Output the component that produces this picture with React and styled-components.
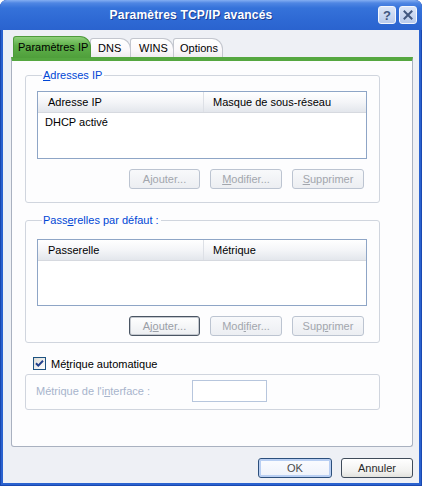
import React from 'react';
import styled, { createGlobalStyle, css } from 'styled-components';

const Global = createGlobalStyle`
  html, body { margin: 0; padding: 0; background: #ffffff; }
  body { font-family: "Liberation Sans", Arial, sans-serif; font-size: 11px; color: #000; }
`;

const Window = styled.div`
  width: 422px;
  height: 486px;
  box-sizing: border-box;
  display: flex;
  flex-direction: column;
  background: #2a62cf;
  border-radius: 7px 7px 0 0;
  overflow: hidden;
  box-shadow: inset 1px 0 0 #1a48b0, inset -1px 0 0 #1a48b0, inset 0 -1px 0 #1a48b0;
`;

const TitleBar = styled.div`
  height: 30px;
  flex: none;
  display: flex;
  align-items: center;
  padding: 0 4px 0 4px;
  background: linear-gradient(#84aef2 0px, #4f86e3 3px, #3572da 8px, #2e69d4 20px, #2a63cf 30px);
`;

const Title = styled.div`
  flex: 1;
  text-align: center;
  color: #fff;
  font-weight: bold;
  font-size: 12px;
  letter-spacing: 0.2px;
  text-shadow: 1px 1px 0 #1b3f94;
`;

const CaptionButtons = styled.div`
  display: flex;
  gap: 3px;
  margin-right: 1px;
`;

const CaptionButton = styled.div`
  width: 18px;
  height: 18px;
  box-sizing: border-box;
  border: 1px solid #f4f7fd;
  border-radius: 3px;
  background: linear-gradient(#dbe5f7, #b9cbec);
  display: flex;
  align-items: center;
  justify-content: center;
  color: #41577f;
  font-weight: bold;
  font-size: 13px;
`;

const Client = styled.div`
  flex: 1;
  margin: 0 3px 3px 3px;
  background: #eef0f5;
  display: flex;
  flex-direction: column;
  padding: 6px 6px 0 8px;
`;

const TabRow = styled.div`
  display: flex;
  align-items: flex-end;
  height: 21px;
  padding-left: 2px;
`;

const Tab = styled.div`
  box-sizing: border-box;
  width: ${p => p.$w}px;
  height: ${p => (p.$active ? '22px' : '19px')};
  margin-bottom: ${p => (p.$active ? '-1px' : '0')};
  padding: 0 0 0 ${p => p.$pl || 5}px;
  display: flex;
  align-items: center;
  white-space: nowrap;
  border-radius: 3px 11px 0 0;
  ${p => p.$active
    ? css`
      background: linear-gradient(#8fd07b, #5fb04a 40%, #4f9f3b);
      border: 1px solid #4f9a3c;
      border-bottom: none;
      padding-bottom: 2px;
      z-index: 1;
    `
    : css`
      background: linear-gradient(#ffffff, #fbf9fb 60%, #efecf0);
      border: 1px solid #c3c6ce;
      border-bottom: none;
      margin-left: -1px;
    `}
`;

const Panel = styled.div`
  height: 390px;
  box-sizing: border-box;
  background: #fdfdfe;
  border: 1px solid #a9b1c0;
  border-top: 4px solid #55a740;
  border-radius: 0 0 3px 3px;
  display: flex;
  flex-direction: column;
  padding: 0 32px 0 13px;
`;

const Group = styled.fieldset`
  margin: ${p => p.$mt}px 0 0 0;
  padding: ${p => p.$pt}px 0 ${p => p.$pb}px ${p => p.$pl || 11}px;
  border: 1px solid #d0d5de;
  border-radius: 3px;
  min-width: 0;
`;

const Legend = styled.legend`
  color: #0046d5;
  line-height: 13px;
  padding: 0 2px 0 1px;
  margin-left: 5px;
`;

const Acc = styled.span`
  text-decoration: underline;
  text-underline-offset: 1px;
`;

const ListBox = styled.div`
  width: 330px;
  height: ${p => p.$h}px;
  box-sizing: border-box;
  border: 1px solid #8ea5c6;
  background: #fff;
  display: flex;
  flex-direction: column;
`;

const ListHeader = styled.div`
  height: 20px;
  flex: none;
  display: grid;
  grid-template-columns: 165px 1fr;
  background: linear-gradient(#ffffff, #f4f5f8 50%, #e3e6ec);
  border-bottom: 1px solid #d6d9df;
`;

const HeaderCell = styled.div`
  display: flex;
  align-items: center;
  padding-left: ${p => p.$pl}px;
  & + & { border-left: 1px solid #dde0e6; }
`;

const ListRow = styled.div`
  height: 17px;
  display: flex;
  align-items: center;
  padding-left: 7px;
`;

const ButtonRow = styled.div`
  width: 327px;
  display: flex;
  justify-content: flex-end;
  gap: 10px;
  margin-top: ${p => p.$mt}px;
`;

const Button = styled.div`
  width: ${p => p.$w || 72}px;
  height: 20px;
  box-sizing: border-box;
  border-radius: 3px;
  display: flex;
  align-items: center;
  justify-content: center;
  ${p => p.$variant === 'disabled' && css`
    border: 1px solid #bcc4d1;
    background: linear-gradient(#f8f9fb, #eceef2);
    color: #a2a6ad;
  `}
  ${p => p.$variant === 'focus' && css`
    border: 1px solid #4a5563;
    background: linear-gradient(#ffffff, #eceef1);
    box-shadow: inset 0 0 0 1px #c4c8cf;
    color: #9a9ea6;
  `}
  ${p => p.$variant === 'default' && css`
    border: 1px solid #2c4f7c;
    background: linear-gradient(#fbfcff, #eef2fa);
    box-shadow: inset 0 0 0 2px #b9cff3;
    color: #4b4b4b;
  `}
  ${p => p.$variant === 'normal' && css`
    border: 1px solid #3f4b5a;
    background: linear-gradient(#ffffff, #f1f1ef 70%, #e2e2dd);
    color: #2a2a2a;
  `}
`;

const CheckRow = styled.div`
  display: flex;
  align-items: center;
  gap: 5px;
  margin: 14px 0 0 8px;
  height: 13px;
`;

const CheckBox = styled.div`
  width: 13px;
  height: 13px;
  box-sizing: border-box;
  border: 1px solid #1d5281;
  background: linear-gradient(135deg, #dcdcd7, #ffffff);
  display: flex;
  align-items: center;
  justify-content: center;
`;

const MetricRow = styled.div`
  display: flex;
  align-items: center;
`;

const DisabledLabel = styled.div`
  width: 156px;
  color: #a7b4cc;
`;

const TextBox = styled.div`
  width: 75px;
  height: 22px;
  box-sizing: border-box;
  border: 1px solid #b7c6dd;
  background: #fff;
`;

const Footer = styled.div`
  display: flex;
  justify-content: flex-end;
  gap: 9px;
  margin-top: 11px;
`;

export default function App() {
  return (
    <>
      <Global />
      <Window>
        <TitleBar>
          <Title>Paramètres TCP/IP avancés</Title>
          <CaptionButtons>
            <CaptionButton>?</CaptionButton>
            <CaptionButton>
              <svg width="10" height="10" viewBox="0 0 10 10">
                <path d="M1.5 1.5 L8.5 8.5 M8.5 1.5 L1.5 8.5" stroke="#41577f" strokeWidth="2" strokeLinecap="square" />
              </svg>
            </CaptionButton>
          </CaptionButtons>
        </TitleBar>
        <Client>
          <TabRow>
            <Tab $active $w={78} $pl={4}>Paramètres IP</Tab>
            <Tab $w={41} $pl={7}>DNS</Tab>
            <Tab $w={44} $pl={8}>WINS</Tab>
            <Tab $w={50} $pl={6}>Options</Tab>
          </TabRow>
          <Panel>
            <Group $mt={8} $pt={9} $pb={13}>
              <Legend><Acc>A</Acc>dresses IP</Legend>
              <ListBox $h={68}>
                <ListHeader>
                  <HeaderCell $pl={10}>Adresse IP</HeaderCell>
                  <HeaderCell $pl={9}>Masque de sous-réseau</HeaderCell>
                </ListHeader>
                <ListRow>DHCP activé</ListRow>
              </ListBox>
              <ButtonRow $mt={10}>
                <Button $variant="disabled" $w={71}>A<Acc>j</Acc>outer...</Button>
                <Button $variant="disabled"><Acc>M</Acc>odifier...</Button>
                <Button $variant="disabled"><Acc>S</Acc>upprimer</Button>
              </ButtonRow>
            </Group>
            <Group $mt={11} $pt={12} $pb={6}>
              <Legend>Pass<Acc>e</Acc>relles par défaut :</Legend>
              <ListBox $h={67}>
                <ListHeader>
                  <HeaderCell $pl={10}>Passerelle</HeaderCell>
                  <HeaderCell $pl={9}>Métrique</HeaderCell>
                </ListHeader>
              </ListBox>
              <ButtonRow $mt={10}>
                <Button $variant="focus" $w={71}>Aj<Acc>o</Acc>uter...</Button>
                <Button $variant="disabled">Mod<Acc>i</Acc>fier...</Button>
                <Button $variant="disabled">Sup<Acc>p</Acc>rimer</Button>
              </ButtonRow>
            </Group>
            <CheckRow>
              <CheckBox>
                <svg width="9" height="9" viewBox="0 0 9 9">
                  <path d="M1 4.2 L3.3 6.6 L8 1.8" stroke="#23418c" fill="none" strokeWidth="2" />
                </svg>
              </CheckBox>
              <span>Mé<Acc>t</Acc>rique automatique</span>
            </CheckRow>
            <Group $mt={4} $pt={5} $pb={7} $pl={10}>
              <MetricRow>
                <DisabledLabel>Métrique de l'i<Acc>n</Acc>terface :</DisabledLabel>
                <TextBox />
              </MetricRow>
            </Group>
          </Panel>
          <Footer>
            <Button $variant="default" $w={74}>OK</Button>
            <Button $variant="normal" $w={72}>Annuler</Button>
          </Footer>
        </Client>
      </Window>
    </>
  );
}
